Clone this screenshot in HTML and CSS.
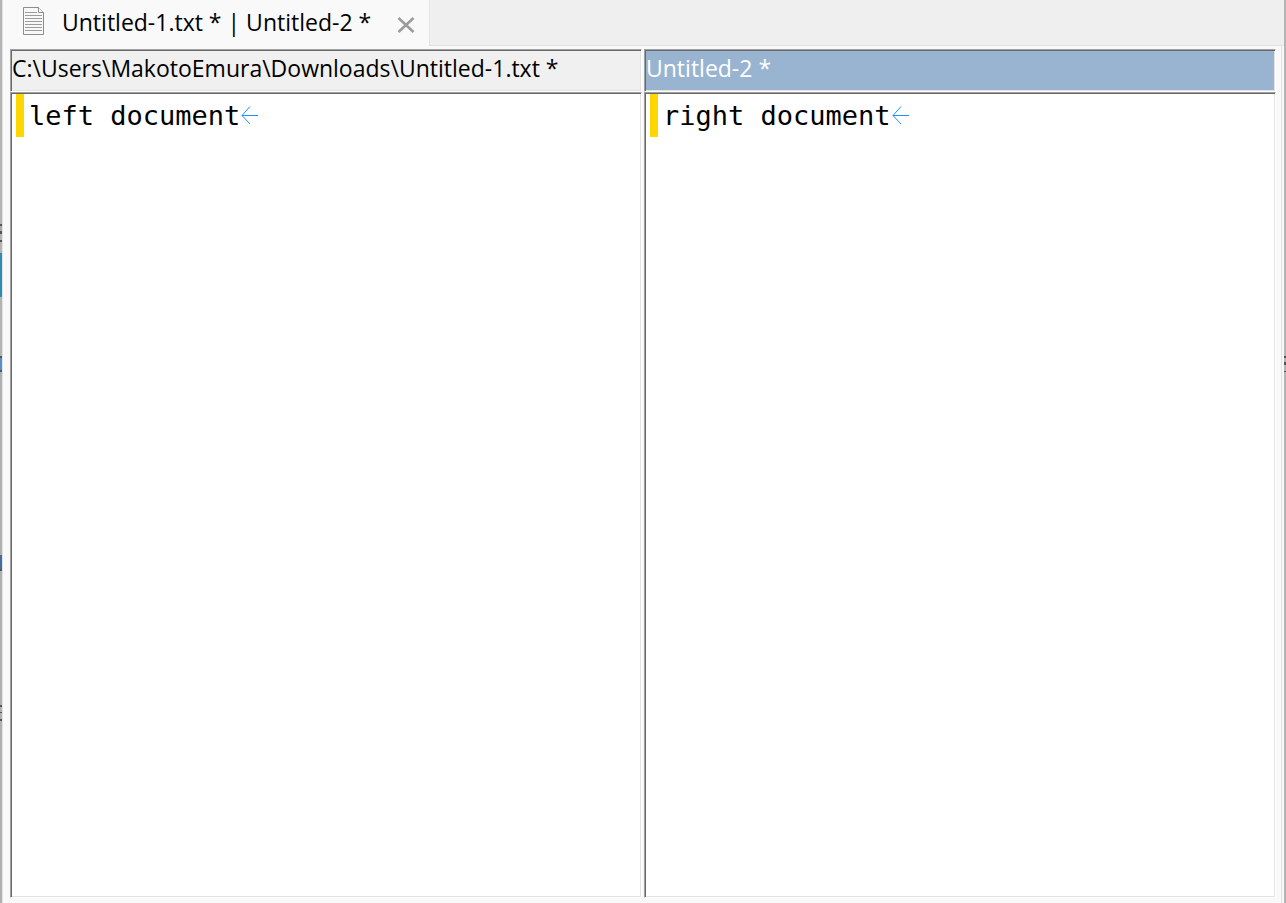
FILE: index.html
```html
<!DOCTYPE html>
<html lang="en">
<head>
<meta charset="utf-8">
<title>Untitled-1.txt * | Untitled-2 *</title>
<link rel="stylesheet" href="styles.css">
</head>
<body>
<div class="desktop">
  <div class="backdrop backdrop-left"></div>
  <div class="window">
    <header class="tabbar">
      <div class="tab">
        <svg class="file-icon" width="22" height="28" viewBox="0 0 22 28" aria-hidden="true">
          <path d="M.5.5H15.5L20.500 5.500V27.500H.5Z" fill="#f8f8f8" stroke="#8c8c8c"/>
          <path d="M15.500.5V5.500H20.500" fill="#fff" stroke="#8c8c8c"/>
          <path d="M2 5.500H14M2 8.500H19M2 11.500H19M2 14.500H19M2 17.500H19M2 20.500H19M2 23.500H19" stroke="#9c9c9c" fill="none"/>
        </svg>
        <span class="tab-title">Untitled-1.txt * | Untitled-2 *</span>
        <button class="close" type="button" aria-label="Close tab">
          <svg width="18" height="16" viewBox="0 0 18 16"><path d="M1.500 1L16.500 15M16.500 1L1.500 15" stroke="#9b9b9b" stroke-width="2.600" fill="none"/></svg>
        </button>
      </div>
      <div class="tab-space"></div>
    </header>
    <main class="panes">
      <section class="pane">
        <h2 class="pane-title sunken">C:\Users\MakotoEmura\Downloads\Untitled-1.txt *</h2>
        <div class="editor sunken">
          <div class="line"><span class="changed"></span><span class="code">left document</span><svg class="eol" width="18" height="20" viewBox="0 0 18 20" aria-hidden="true"><path d="M18 9.500H2M10 .5L2 9.500L10 18" stroke="#1e8fff" fill="none"/></svg></div>
        </div>
      </section>
      <section class="pane">
        <h2 class="pane-title sunken active">Untitled-2 *</h2>
        <div class="editor sunken">
          <div class="line"><span class="changed"></span><span class="code">right document</span><svg class="eol" width="18" height="20" viewBox="0 0 18 20" aria-hidden="true"><path d="M18 9.500H2M10 .5L2 9.500L10 18" stroke="#1e8fff" fill="none"/></svg></div>
        </div>
      </section>
    </main>
  </div>
  <div class="backdrop backdrop-right"></div>
</div>
</body>
</html>
```
FILE: styles.css
```css
* { box-sizing: border-box; }

body {
  margin: 0;
  font-family: "Open Sans", "Noto Sans", sans-serif;
  font-size: 23px;
  color: #000;
}

.desktop {
  display: flex;
  height: 100vh;
}

.backdrop { width: 2px; flex: none; }

.backdrop-left {
  background: linear-gradient(#b4b4b4 224px, #555 224px 226px, #aaa 226px 231px, #555 231px 234px, #b4b4b4 234px 240px, #555 240px 242px, #b4b4b4 242px 253px, #2b8cb5 253px 297px, #b4b4b4 297px 356px, #555 356px 358px, #5a8ec4 358px 370px, #555 370px 372px, #b0b0b0 372px 555px, #446a9f 555px 569px, #555 569px 571px, #b0b0b0 571px 705px, #555 705px 707px, #b0b0b0 707px 712px, #555 712px 713px, #b0b0b0 713px 719px, #555 719px 721px, #b0b0b0 721px);
}

.backdrop-right {
  background: linear-gradient(#b4b4b4 356px, #555 356px 358px, #b4b4b4 358px 362px, #555 362px 365px, #b4b4b4 365px 371px, #555 371px 372px, #b4b4b4 372px);
}

.window {
  flex: 1;
  min-width: 0;
  display: flex;
  flex-direction: column;
  background: #f9f9f9;
  border-left: 1px solid #e3e3e3;
}

.tabbar {
  display: flex;
  height: 46px;
  flex: none;
}

.tab {
  display: flex;
  align-items: center;
  padding: 0 14px 4px 20px;
}

.tab-title {
  margin: 2px 26px 0 17px;
  line-height: 32px;
  white-space: nowrap;
}

.close {
  display: flex;
  padding: 0;
  margin-top: 7px;
  border: 0;
  background: none;
}

.tab-space {
  flex: 1;
  background: #efefef;
  border-left: 1px solid #e3e3e3;
  border-bottom: 1px solid #e3e3e3;
}

.panes {
  flex: 1;
  min-height: 0;
  display: grid;
  grid-template-columns: 1fr 1fr;
  gap: 2px;
  margin-right: 2px;
  padding: 3px 5px 5px 7px;
  border-right: 1px solid #e3e3e3;
}

.pane {
  min-width: 0;
  display: flex;
  flex-direction: column;
}

/* Two-tone bevel: outer grey and white, inner dark and light */
.sunken {
  border: 1px solid;
  border-color: #a0a0a0 #fff #fff #a0a0a0;
  box-shadow: inset 1px 1px #696969, inset -1px -1px #e3e3e3;
}

.pane-title {
  margin: 0;
  height: 43px;
  padding: 1px;
  font-size: 23px;
  font-weight: 400;
  line-height: 34px;
  white-space: nowrap;
  overflow: hidden;
  background-color: #f0f0f0;
}

.pane-title.active {
  background-color: #99b4d1;
  color: #fff;
}

.editor {
  flex: 1;
  padding: 1px 1px 1px 5px;
  background-color: #fff;
}

.line {
  display: flex;
  align-items: center;
  height: 43px;
}

.changed {
  width: 8px;
  height: 43px;
  margin-right: 5px;
  background: #ffd700;
}

.code {
  font-family: "DejaVu Sans Mono", monospace;
  font-size: 27px;
  line-height: 43px;
}
```
